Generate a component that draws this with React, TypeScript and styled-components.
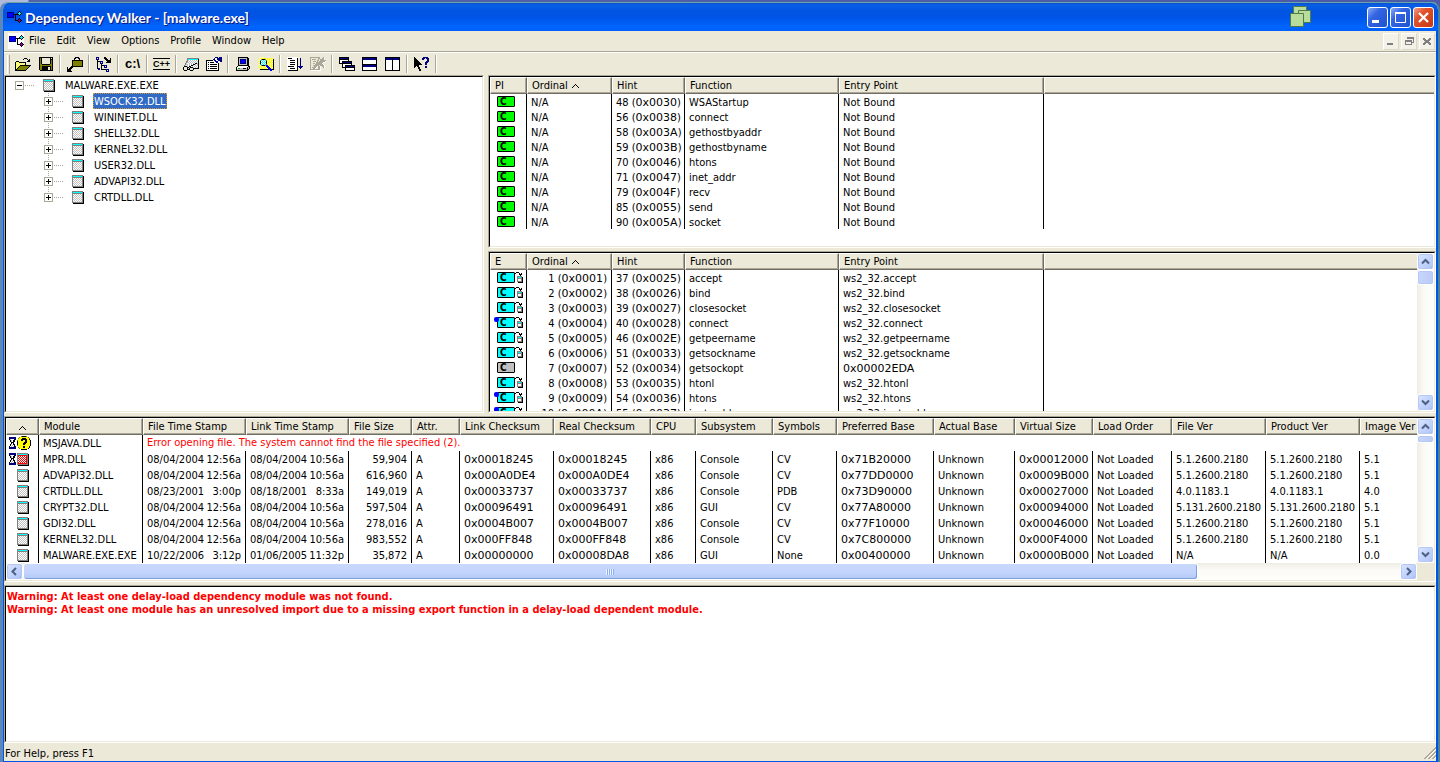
import React from 'react';
import styled, { createGlobalStyle, css } from 'styled-components';

const GlobalStyle = createGlobalStyle`
  *, *::before, *::after { box-sizing: border-box; }
  html, body { margin: 0; padding: 0; }
  body {
    font-family: "DejaVu Sans Condensed", Tahoma, "DejaVu Sans", sans-serif;
    font-size: 11px;
    line-height: 13px;
    color: #000;
    background: #5a6cb4;
    cursor: default;
  }
  button {
    font: inherit;
    color: inherit;
    margin: 0;
    padding: 0;
    border: 0;
    background: none;
  }
`;

/* ---------- pixel icons ---------- */

const palette: Record<string, string> = {
  K: '#000000', W: '#ffffff', Y: '#ffff00', O: '#808000', S: '#ece9d8', B: '#0000ff',
  N: '#000080', G: '#808080', L: '#c0c0c0', C: '#00ffff', T: '#008080', R: '#ff0000',
  P: '#800080', E: '#00c000', A: '#aca899', V: '#ffff99',
};

const PixelSvg = styled.svg`
  display: block;
  flex: none;
  shape-rendering: crispEdges;
`;

function Pixels({ rows }: { rows: string[] }) {
  const width = Math.max(...rows.map((r) => r.length));
  const rects: React.ReactElement[] = [];
  rows.forEach((row, y) => {
    let x = 0;
    while (x < row.length) {
      const ch = row[x];
      let end = x + 1;
      while (end < row.length && row[end] === ch) end += 1;
      if (palette[ch]) {
        rects.push(<rect key={`${x}-${y}`} x={x} y={y} width={end - x} height={1} fill={palette[ch]} />);
      }
      x = end;
    }
  });
  return (
    <PixelSvg width={width} height={rows.length} viewBox={`0 0 ${width} ${rows.length}`} aria-hidden="true">
      {rects}
    </PixelSvg>
  );
}

const art = {
  app: [
    '............K..',
    'NNNNNNN....KCK.',
    'NBBBBBN...KCCCK',
    'NBBBBBNKKKKKCK.',
    'NBBBBBN.K...K..',
    'NBBBBBN.K......',
    'NNNNNNN.K......',
    '........K...K..',
    '........K..KPK.',
    '........KKKPPPK',
    '...........KPK.',
    '............K..',
  ],
  open: [
    '.........KKK....',
    '........K...K.K.',
    '.............KK.',
    '.KKK........KKK.',
    'KYWYKKKKKKK.....',
    'KWYWYWYWYWK.....',
    'KYWYWYWYWYK.....',
    'KWYWYKKKKKKKKKKK',
    'KYWYKOOOOOOOOOK.',
    'KWYKOOOOOOOOOK..',
    'KYKOOOOOOOOOK...',
    'KKOOOOOOOOOK....',
    'KKKKKKKKKKK.....',
  ],
  save: [
    'KKKKKKKKKKKKKK',
    'KOKSSSSSSSSKSK',
    'KOKSSSSSSSSKKK',
    'KOKSSSSSSSSKOK',
    'KOKSSSSSSSSKOK',
    'KOKSSSSSSSSKOK',
    'KOKSSSSSSSSKOK',
    'KOOKKKKKKKKOOK',
    'KOOOOOOOOOOOOK',
    'KOOKKKKKKKKKOK',
    'KOOKKKKKKSSKOK',
    'KOOKKKKKKSSKOK',
    'KOOKKKKKKSSKOK',
    '.KKKKKKKKKKKKK',
  ],
  paste: [
    '........KKKK....',
    '.......KK..KK...',
    '.......K....K...',
    '.....KKKKKKKKKKK',
    '.....KOOOOOOOOOK',
    '.....KOOOOOOOOOK',
    '.....KOOOOOOOOOK',
    '.....KOOOOOOOOOK',
    '.....KOOOOOOOOOK',
    '....KKKKKKKKKKKK',
    'K..KKK..........',
    'K.KKK...........',
    'KKKK............',
    'KKKK............',
    'KKKKK...........',
  ],
  expand: [
    'NNN.....KK......',
    'N.N.....KKK...K.',
    'NNN......KKK..K.',
    '.K........KKKKK.',
    '.KKKNNN....KKKK.',
    '.K..N.N...KKKKK.',
    '.K..NNN.........',
    '.K...K..........',
    '.K...KKKNNN.....',
    '.K...K..N.N.....',
    '.K...K..NNN.....',
    '.KNN.K..........',
    '..NN.KKKKKNNN...',
    '..........N.N...',
    '..........NNN...',
  ],
  glasses: [
    '....GGGGGGGGGGGG',
    '....GCCCCCCCCCCK',
    '....GLWLWLWLWLWK',
    '...GGWLWLWLWLWLK',
    '...GLLWLWLWLWLWK',
    '..GLWWLWLWLWKKLK',
    '..GLLWLWLWKKLWLK',
    '.GLWLWLWKKLWLWLK',
    '.KKKLWKKWLWLWLWK',
    'K...KKLKKKLWLWLK',
    'K...K.K...KKKKKK',
    'K...KKK...K.....',
    '.KKK...KKK......',
  ],
  properties: [
    '........WNNN.NNN',
    '.......WNWWNNNNN',
    '......WNNWWNNNNN',
    'KKKKKKKWNNWWNNNN',
    'KWWWWWWWWNNNW.NN',
    'KWKWKKKKWWNNWW..',
    'KWWWWWWWWWWWK...',
    'KWKWKKKKKKKWK...',
    'KWWWWWWWWWWWK...',
    'KWKWKKKKKKKWK...',
    'KWWWWWWWWWWWK...',
    'KWKWKKKKKKKWK...',
    'KWWWWWWWWWWWK...',
    'KKKKKKKKKKKKK...',
  ],
  computer: [
    '..KKKKKKKKKK..',
    '..KLLLLLLLLKK.',
    '..KLNNNNNNLKK.',
    '..KLNBBBBNLKK.',
    '..KLNBBBBNLKK.',
    '..KLNBBBBNLKK.',
    '..KLNNNNNNLKK.',
    '..KLLLLLLLLKK.',
    '..KKKKKKKKKKK.',
    '.KWWWWWWWWWWKK',
    'KWWWWWWWWWWKLK',
    'KWEELLLKKKLKLK',
    'KLLLLLLLLLLKK.',
    'KKKKKKKKKKKK..',
  ],
  search: [
    '..VVVV..........',
    '.VYVYVYYVYVYVYY.',
    '.YVGKKKGVYVYVYVK',
    '.VGCWCWCGYVYVYYK',
    '.YKWCWCWKYVYVYVK',
    '.VKCWCWCKVYVYVYK',
    '.YKWCWCWKYVYVYVK',
    '.VGCWCWCGYVYVYYK',
    '.YVGKKKGBBVYVYVK',
    '.VYVYVYVBBBYVYYK',
    '.YVYVYVYVBBBVYVK',
    '.VYVYVYVYVBBBYYK',
    '..KKKKKKKKKBBBKK',
    '............BB..',
  ],
  listDown: [
    'WWWWWWWWWWW.....',
    'WKKKKWWWWWK..N..',
    'WWWWWWWWWWK..N..',
    'WWWKKKKKWWK..N..',
    'WWWWWWWWWWK..N..',
    'WWWKKKKKWWK..N..',
    'WWWWWWWWWWK..N..',
    'WWWKKKKKWWK..N..',
    'WWWWWWWWWWK..N..',
    'WKKKKKKWWWKNNNNN',
    'WWWWWWWWWWK.NNN.',
    'WWWKKKKKWWK..N..',
    'WWWWWWWWWWK.....',
    '.KKKKKKKKKK.....',
  ],
  listOff: [
    'AAAAAAAAAA...A..',
    'A.......AA..AAW.',
    'A.AAAA..A.AAAAW.',
    'A......AA.AAAAAA',
    'A..AAA.A.AAAAAAW',
    'A.....AAAAAAAWW.',
    'A..AA.AAAAAAW...',
    'A....AAAAAAAAW..',
    'A..AAAAAA.AAAAW.',
    'A...AAAWAAW.AAW.',
    'A.AAAAW.AAW..AW.',
    'A..AAW..AAW.....',
    'AAAAAAAAAAW.....',
    '.WWWWWWWWWW.....',
  ],
  cascade: [
    'KKKKKKKKKK......',
    'KNNNNNNNNK......',
    'KKKKKKKKKK......',
    'KWWWWWWWWK......',
    'KWWKKKKKKKKKK...',
    'KWWKNNNNNNNNK...',
    'KKKKKKKKKKKKK...',
    '...KWWWWWWWWK...',
    '...KWWKKKKKKKKKK',
    '...KWWKNNNNNNNNK',
    '...KKKKKKKKKKKKK',
    '......KWWWWWWWWK',
    '......KWWWWWWWWK',
    '......KKKKKKKKKK',
  ],
  tileH: [
    'KKKKKKKKKKKKKKK',
    'KNNNNNNNNNNNNNK',
    'KNNNNNNNNNNNNNK',
    'KWWWWWWWWWWWWWK',
    'KWWWWWWWWWWWWWK',
    'KWWWWWWWWWWWWWK',
    'KWWWWWWWWWWWWWK',
    'KKKKKKKKKKKKKKK',
    'KNNNNNNNNNNNNNK',
    'KNNNNNNNNNNNNNK',
    'KWWWWWWWWWWWWWK',
    'KWWWWWWWWWWWWWK',
    'KWWWWWWWWWWWWWK',
    'KKKKKKKKKKKKKKK',
  ],
  tileV: [
    'KKKKKKKKKKKKKKK',
    'KNNNNNNKNNNNNNK',
    'KNNNNNNKNNNNNNK',
    'KWWWWWWKWWWWWWK',
    'KWWWWWWKWWWWWWK',
    'KWWWWWWKWWWWWWK',
    'KWWWWWWKWWWWWWK',
    'KWWWWWWKWWWWWWK',
    'KWWWWWWKWWWWWWK',
    'KWWWWWWKWWWWWWK',
    'KWWWWWWKWWWWWWK',
    'KWWWWWWKWWWWWWK',
    'KWWWWWWKWWWWWWK',
    'KKKKKKKKKKKKKKK',
  ],
  help: [
    'K........NNNNN..',
    'KK......NNN.NNN.',
    'KKK.....NN...NN.',
    'KKKK.........NN.',
    'KKKKK.......NNN.',
    'KKKKKK.....NNN..',
    'KKKKKKK....NN...',
    'KKKKKKKK...NN...',
    'KKKKK...........',
    'KK.KK......NN...',
    'K...KK.....NN...',
    '....KK..........',
    '.....KK.........',
    '.....KK.........',
  ],
  module: [
    'GGGGGGGGGGG.',
    'GCCCCCCCCCGK',
    'GGGGGGGGGGGK',
    'GWLWLWLWLWGK',
    'GLWLWLWLWLGK',
    'GWLWLWLWLWGK',
    'GLWLWLWLWLGK',
    'GWLWLWLWLWGK',
    'GLWLWLWLWLGK',
    'GWLWLWLWLWGK',
    'GLWLWLWLWLGK',
    'GGGGGGGGGGGK',
    '.KKKKKKKKKKK',
  ],
  moduleRed: [
    'GGGGGGGGGGG.',
    'GCCCCCCCCCGK',
    'GRRRRRRRRRGK',
    'GRWRWRWRWRGK',
    'GWRWRWRWRRGK',
    'GRWRWRWRWRGK',
    'GWRWRWRWRRGK',
    'GRWRWRWRWRGK',
    'GWRWRWRWRRGK',
    'GRWRWRWRWRGK',
    'GRRRRRRRRRGK',
    'GGGGGGGGGGGK',
    '.KKKKKKKKKKK',
  ],
  hourglass: [
    'NNNNNNN',
    'NNNNNNN',
    'KLWWWKN',
    '.KLWKK.',
    '.KLWKK.',
    '..KKK..',
    '..KWK..',
    '.KLWKK.',
    '.KWLWK.',
    'KWLWLKN',
    'NNNNNNN',
    'NNNNNNN',
  ],
  question: [
    '....OKKKKO....',
    '..OYYYYYYYYO..',
    '.OYYYKKKKYYYO.',
    '.YYYKKKKKKYYK.',
    'OYYYKKYYKKYYYK',
    'KYYYYYYYKKYYYK',
    'KYYYYYYKKKYYYK',
    'KYYYYYKKKYYYYK',
    'KYYYYYKKYYYYYK',
    'OYYYYYYYYYYYYK',
    '.YYYYYKKYYYYK.',
    '.OYYYYKKYYYYK.',
    '..OYYYYYYYYK..',
    '....KKKKKK....',
  ],
  forward: [
    '.KKK....',
    'K...K.K.',
    '....KKK.',
    '.....K..',
    '..GGGGG.',
    '..GCCCGK',
    '..GGGGGK',
    '..GWWWGK',
    '..GWWWGK',
    '..GGGGGK',
    '...KKKKK',
  ],
  caret: [
    '...K...',
    '..K.K..',
    '.K...K.',
    'K.....K',
  ],
  grip: [
    '...........A',
    '..........AA',
    '.........AAW',
    '........AAW.',
    '.......AAW.A',
    '......AAW.AA',
    '.....AAW.AAW',
    '....AAW.AAW.',
    '...AAW.AAW.A',
    '..AAW.AAW.AA',
    '.AAW.AAW.AAW',
    'AAW.AAW.AAW.',
  ],
};

/* ---------- window frame ---------- */

const Desktop = styled.div`
  min-height: 100vh;
  padding-top: 2px;
  display: flex;
  background: linear-gradient(90deg, #b0b8dc 0, #b0b8dc 28px, #5363a8 29px, #4c5aa8 100%);
`;

const Frame = styled.main`
  flex: 1;
  min-width: 0;
  display: flex;
  flex-direction: column;
  border-style: solid;
  border-width: 1px 2px 0 3px;
  border-color: #6aa6ae #4c8295 #0054e3 #5b88b8;
  border-radius: 8px 8px 0 0;
  background: #ece9d8;
  overflow: hidden;
`;

const TitleBar = styled.header`
  height: 28px;
  flex: none;
  display: flex;
  align-items: center;
  padding: 0 4px;
  background: linear-gradient(#0a4fc4 0, #0a5fe8 2px, #0054e0 8px, #0054e6 14px, #0064ff 24px, #0060fa 100%);
`;

const Title = styled.h1`
  flex: 1;
  margin: 0;
  padding: 2px 0 0 3px;
  font: bold 14px/20px Lato, "Trebuchet MS", sans-serif;
  color: #fff;
  text-shadow: 1px 1px 0 #0a1883;
`;

const CaptionButtons = styled.div`
  display: flex;
  gap: 2px;
  margin-left: 55px;
`;

const CaptionButton = styled.button<{ $close?: boolean }>`
  width: 21px;
  height: 21px;
  display: flex;
  align-items: center;
  justify-content: center;
  border: 1px solid #fff;
  border-radius: 3px;
  background: ${(p) => (p.$close
    ? 'linear-gradient(135deg, #f0a084 0, #e0532e 35%, #c83810 100%)'
    : 'linear-gradient(135deg, #8cacf4 0, #3465e4 35%, #1f52cc 100%)')};
`;

const Body = styled.div`
  flex: 1;
  min-height: 0;
  display: flex;
  flex-direction: column;
  border: solid #0054e3;
  border-width: 0 2px 1px 1px;
`;

const MenuBar = styled.nav`
  height: 21px;
  flex: none;
  display: flex;
  align-items: center;
  padding: 0 1px 0 4px;
  border-bottom: 1px solid #aca899;
`;

const MenuIcon = styled.span`
  display: flex;
  width: 16px;
  height: 16px;
  align-items: center;
  justify-content: flex-end;
  background: #fff;
`;

const Menu = styled.button`
  padding: 1px 6px 2px 5px;
`;

const Spacer = styled.span`
  flex: 1;
`;

const MdiButton = styled.button`
  width: 16px;
  height: 17px;
  margin-left: 2px;
  display: flex;
  align-items: center;
  justify-content: center;
  border: 1px solid #fff;
  border-right-color: #dcd8c8;
  border-bottom-color: #dcd8c8;
  background: #f4f2e8;
`;

const ToolBar = styled.div`
  height: 23px;
  flex: none;
  display: flex;
  align-items: center;
  border-top: 1px solid #fff;
`;

const Gripper = styled.span`
  width: 3px;
  height: 19px;
  margin: 0 1px 0 3px;
  border-left: 1px solid #fff;
  border-right: 1px solid #aca899;
`;

const Tool = styled.button`
  width: 23px;
  height: 21px;
  display: flex;
  align-items: center;
  justify-content: center;
`;

const ToolSeparator = styled.span`
  width: 2px;
  height: 18px;
  margin: 0 2px;
  border-left: 1px solid #aca899;
  border-right: 1px solid #fff;
`;

const ToolText = styled.span<{ $lined?: boolean }>`
  font: bold 13px/14px "Liberation Sans", Arial, sans-serif;
  ${(p) => p.$lined && css`
    font-size: 9px;
    line-height: 10px;
    border: solid #000;
    border-width: 1px 0;
  `}
`;

/* ---------- panes ---------- */

const Upper = styled.div`
  flex: none;
  display: grid;
  grid-template-columns: 480px minmax(0, 1fr);
  gap: 4px;
`;

const Stack = styled.div`
  display: grid;
  grid-template-rows: 173px 162px;
  gap: 3px;
  min-width: 0;
`;

const PaneOuter = styled.section<{ $grow?: boolean }>`
  display: flex;
  min-width: 0;
  border: 1px solid;
  border-color: #aca899 #fff #fff #aca899;
  ${(p) => p.$grow && css`flex: 1;`}
`;

const PaneInner = styled.div`
  flex: 1;
  min-width: 0;
  display: flex;
  border: 1px solid;
  border-color: #000 #ece9d8 #ece9d8 #000;
  background: #fff;
  overflow: hidden;
`;

function Pane({ children, grow, label }: { children: React.ReactNode; grow?: boolean; label: string }) {
  return (
    <PaneOuter $grow={grow} aria-label={label}>
      <PaneInner>{children}</PaneInner>
    </PaneOuter>
  );
}

const Lower = styled.div`
  flex: 1;
  display: flex;
  flex-direction: column;
  gap: 3px;
  padding-top: 3px;
`;

/* ---------- tree ---------- */

const Tree = styled.ul`
  list-style: none;
  margin: 0;
  padding: 0 0 0 9px;
`;

const Branch = styled.ul`
  list-style: none;
  margin: 0;
  padding: 0 0 0 29px;
`;

const Node = styled.div`
  height: 16px;
  display: flex;
  align-items: center;
`;

const Stem = styled.span<{ $child?: boolean }>`
  align-self: stretch;
  width: 9px;
  display: flex;
  align-items: center;
  ${(p) => p.$child && css`
    background: repeating-linear-gradient(#aca899 0, #aca899 1px, transparent 1px, transparent 2px) 4px 0 / 1px 100% no-repeat;
    li:last-child > div > & { background-size: 1px 50%; }
  `}
`;

const Toggle = styled.button`
  width: 9px;
  height: 9px;
  border: 1px solid #aca899;
  background: #fff;
`;

const Twig = styled.span`
  width: 10px;
  height: 1px;
  margin-right: 9px;
  background: repeating-linear-gradient(90deg, transparent 0, transparent 1px, #aca899 1px, #aca899 2px);
`;

const NodeLabel = styled.span<{ $selected?: boolean }>`
  height: 16px;
  margin-left: 9px;
  padding: 1px 0;
  border: 1px solid transparent;
  line-height: 13px;
  ${(p) => p.$selected && css`
    color: #fff;
    background: #316ac5;
    border: 1px dotted #ce953a;
  `}
`;

function TreeNode({ name, open, selected, child }: { name: string; open?: boolean; selected?: boolean; child?: boolean }) {
  return (
    <Node>
      <Stem $child={child}>
        <Toggle aria-label={open ? `Collapse ${name}` : `Expand ${name}`}>
          <Pixels rows={open
            ? ['.......', '.......', '.......', '.KKKKK.', '.......', '.......', '.......']
            : ['.......', '...K...', '...K...', '.KKKKK.', '...K...', '...K...', '.......']} />
        </Toggle>
      </Stem>
      <Twig />
      <Pixels rows={art.module} />
      <NodeLabel $selected={selected}>{name}</NodeLabel>
    </Node>
  );
}

/* ---------- list views ---------- */

const ListArea = styled.div`
  flex: 1;
  min-width: 0;
  display: flex;
  flex-direction: column;
  overflow: hidden;
`;

const ListScroll = styled.div`
  flex: 1;
  min-height: 0;
  overflow: hidden;
`;

const Table = styled.table`
  width: 100%;
  table-layout: fixed;
  border-collapse: separate;
  border-spacing: 0;
`;

const HeadCell = styled.th<{ $center?: boolean; $blank?: boolean }>`
  height: 17px;
  padding: ${(p) => (p.$center ? '1px 0 0' : '1px 0 0 4px')};
  font-weight: normal;
  text-align: ${(p) => (p.$center ? 'center' : 'left')};
  white-space: nowrap;
  overflow: hidden;
  line-height: 14px;
  background: #ece9d8;
  border: 1px solid;
  border-color: #fff #716f64 #716f64 #fff;
  box-shadow: inset -1px -1px 0 #aca899;
  ${(p) => p.$blank && css`border-right: 0; box-shadow: inset 0 -1px 0 #aca899;`}
`;

const HeadLabel = styled.span`
  display: inline-flex;
  align-items: center;
  gap: 4px;
`;

const Cell = styled.td<{ $fn?: boolean; $right?: boolean; $plain?: boolean; $icon?: boolean; $error?: boolean }>`
  height: ${(p) => (p.$fn ? 15 : 16)}px;
  padding: ${(p) => (p.$icon ? '0' : p.$fn ? '2px 4px 0' : '0 4px')};
  line-height: 13px;
  white-space: pre;
  text-align: ${(p) => (p.$right ? 'right' : 'left')};
  border-right: ${(p) => (p.$plain ? '0' : '1px solid #000')};
  ${(p) => !p.$error && css`overflow: hidden;`}
  ${(p) => p.$error && css`color: #ff0000; line-height: 12px; padding-bottom: 1px;`}
`;

const Stamp = styled.span`
  display: flex;
  justify-content: space-between;
`;

const HexDigits = styled.span`
  font-family: "DejaVu Sans", sans-serif;
`;

function Value({ text }: { text: string }) {
  return (
    <>
      {text.split(/(0x[0-9A-F]+)/).map((part, i) => (i % 2 ? <HexDigits key={i}>{part}</HexDigits> : part))}
    </>
  );
}

const IconRow = styled.span`
  display: flex;
  align-items: center;
  position: relative;
  padding-left: 7px;
`;

const Badge = styled.span<{ $color: string }>`
  width: 18px;
  height: 11px;
  padding-left: 2px;
  display: block;
  border: 1px solid #000;
  border-radius: 1px;
  background: ${(p) => p.$color};
  font: bold 10px/9px "DejaVu Sans Condensed", sans-serif;
`;

const CallDot = styled.span`
  position: absolute;
  left: 4px;
  top: 0;
  width: 5px;
  height: 5px;
  border-radius: 2px;
  background: #0000ff;
`;

type FnRow = { icon: 'import' | 'forward' | 'called' | 'plain'; cells: string[] };

function FunctionIcon({ kind }: { kind: FnRow['icon'] }) {
  const color = kind === 'import' ? '#00ff00' : kind === 'plain' ? '#c0c0c0' : '#00ffff';
  return (
    <IconRow>
      <Badge $color={color}>C</Badge>
      {(kind === 'forward' || kind === 'called') && <Pixels rows={art.forward} />}
      {kind === 'called' && <CallDot />}
    </IconRow>
  );
}

function FunctionTable({ first, rows, ordinalRight }: { first: string; rows: FnRow[]; ordinalRight?: boolean }) {
  return (
    <ListScroll>
      <Table>
        <colgroup>
          {[37, 85, 73, 154, 205].map((w, i) => <col key={i} width={w} />)}
          <col />
        </colgroup>
        <thead>
          <tr>
            <HeadCell>{first}</HeadCell>
            <HeadCell><HeadLabel>Ordinal <Pixels rows={art.caret} /></HeadLabel></HeadCell>
            <HeadCell>Hint</HeadCell>
            <HeadCell>Function</HeadCell>
            <HeadCell>Entry Point</HeadCell>
            <HeadCell $blank />
          </tr>
        </thead>
        <tbody>
          {rows.map((r) => (
            <tr key={r.cells[2]}>
              <Cell $fn $icon><FunctionIcon kind={r.icon} /></Cell>
              <Cell $fn $right={ordinalRight}><Value text={r.cells[0]} /></Cell>
              <Cell $fn><Value text={r.cells[1]} /></Cell>
              <Cell $fn>{r.cells[2]}</Cell>
              <Cell $fn><Value text={r.cells[3]} /></Cell>
              <Cell $fn $plain />
            </tr>
          ))}
        </tbody>
      </Table>
    </ListScroll>
  );
}

/* ---------- scroll bars ---------- */

const VBar = styled.div`
  width: 17px;
  flex: none;
  display: flex;
  flex-direction: column;
  background: linear-gradient(90deg, #eeede5, #fbfaf6 40%, #fefefb);
`;

const HBar = styled.div`
  height: 17px;
  flex: none;
  display: flex;
  background: linear-gradient(#eeede5, #fbfaf6 40%, #fefefb);
`;

const ArrowButton = styled.button`
  width: 17px;
  height: 17px;
  flex: none;
  display: flex;
  align-items: center;
  justify-content: center;
  border: 1px solid #fff;
  border-radius: 3px;
  background: linear-gradient(135deg, #dce6fe, #c3d3fd 50%, #aec4f6);
  box-shadow: inset 0 0 0 1px #b4c8f6, inset -1px -1px 0 #8ba8e4;
`;

const VThumb = styled.div<{ $size: number }>`
  height: ${(p) => p.$size}px;
  border: 1px solid #fff;
  border-radius: 3px;
  background: linear-gradient(90deg, #c8d6fb, #b9cbf7);
  box-shadow: inset 0 0 0 1px #b4c8f6, inset 0 -1px 0 #7f9fdd;
`;

const HTrack = styled.div`
  flex: 1;
  display: flex;
`;

const HThumb = styled.div`
  flex: 29;
  display: flex;
  align-items: center;
  justify-content: center;
  border: 1px solid #fff;
  border-radius: 3px;
  background: linear-gradient(#c9d8fc, #c2d3fc 60%, #b0c8f4);
  box-shadow: inset -1px -1px 0 #7f9fdd;
`;

const HRest = styled.div`
  flex: 5;
`;

const ThumbGrip = styled.span`
  width: 8px;
  height: 6px;
  background: repeating-linear-gradient(90deg, #eef4fe 0, #eef4fe 1px, #8cb0f8 1px, #8cb0f8 2px);
`;

const Corner = styled.div`
  height: 17px;
  background: #ece9d8;
`;

const Track = styled.div`
  flex: 1;
`;

function Chevron({ d }: { d: string }) {
  return (
    <svg width="9" height="9" viewBox="0 0 9 9" fill="none" stroke="#4d6185" strokeWidth="2" aria-hidden="true">
      <path d={d} />
    </svg>
  );
}

function VerticalBar({ thumb, corner }: { thumb: number; corner?: boolean }) {
  return (
    <VBar>
      <ArrowButton aria-label="Scroll up"><Chevron d="M1 6.5 4.5 3 8 6.5" /></ArrowButton>
      <VThumb $size={thumb} />
      <Track />
      <ArrowButton aria-label="Scroll down"><Chevron d="M1 2.5 4.5 6 8 2.5" /></ArrowButton>
      {corner && <Corner />}
    </VBar>
  );
}

/* ---------- log and status ---------- */

const Log = styled.div`
  flex: 1;
  padding: 3px 1px 0;
  font-weight: bold;
  line-height: 13px;
  color: #ff0000;
`;

const LogLine = styled.p`
  margin: 0;
`;

const StatusBar = styled.footer`
  height: 18px;
  flex: none;
  display: flex;
  align-items: center;
  justify-content: space-between;
  padding: 2px 0 0 1px;
`;

/* ---------- data ---------- */

const dlls = ['WSOCK32.DLL', 'WININET.DLL', 'SHELL32.DLL', 'KERNEL32.DLL', 'USER32.DLL', 'ADVAPI32.DLL', 'CRTDLL.DLL'];

const imports: FnRow[] = [
  ['48 (0x0030)', 'WSAStartup'],
  ['56 (0x0038)', 'connect'],
  ['58 (0x003A)', 'gethostbyaddr'],
  ['59 (0x003B)', 'gethostbyname'],
  ['70 (0x0046)', 'htons'],
  ['71 (0x0047)', 'inet_addr'],
  ['79 (0x004F)', 'recv'],
  ['85 (0x0055)', 'send'],
  ['90 (0x005A)', 'socket'],
].map(([hint, fn]) => ({ icon: 'import', cells: ['N/A', hint, fn, 'Not Bound'] }));

const exportsList: FnRow[] = [
  { icon: 'forward', cells: ['1 (0x0001)', '37 (0x0025)', 'accept', 'ws2_32.accept'] },
  { icon: 'forward', cells: ['2 (0x0002)', '38 (0x0026)', 'bind', 'ws2_32.bind'] },
  { icon: 'forward', cells: ['3 (0x0003)', '39 (0x0027)', 'closesocket', 'ws2_32.closesocket'] },
  { icon: 'called', cells: ['4 (0x0004)', '40 (0x0028)', 'connect', 'ws2_32.connect'] },
  { icon: 'forward', cells: ['5 (0x0005)', '46 (0x002E)', 'getpeername', 'ws2_32.getpeername'] },
  { icon: 'forward', cells: ['6 (0x0006)', '51 (0x0033)', 'getsockname', 'ws2_32.getsockname'] },
  { icon: 'plain', cells: ['7 (0x0007)', '52 (0x0034)', 'getsockopt', '0x00002EDA'] },
  { icon: 'forward', cells: ['8 (0x0008)', '53 (0x0035)', 'htonl', 'ws2_32.htonl'] },
  { icon: 'called', cells: ['9 (0x0009)', '54 (0x0036)', 'htons', 'ws2_32.htons'] },
  { icon: 'called', cells: ['10 (0x000A)', '55 (0x0037)', 'inet_addr', 'ws2_32.inet_addr'] },
];

const moduleColumns: [string, number][] = [
  ['Module', 104], ['File Time Stamp', 103], ['Link Time Stamp', 103], ['File Size', 63], ['Attr.', 48],
  ['Link Checksum', 94], ['Real Checksum', 97], ['CPU', 45], ['Subsystem', 77], ['Symbols', 64],
  ['Preferred Base', 97], ['Actual Base', 81], ['Virtual Size', 78], ['Load Order', 79], ['File Ver', 94],
  ['Product Ver', 94],
];

const modules: string[][] = [
  ['MPR.DLL', '08/04/2004 12:56a', '08/04/2004 10:56a', '59,904', 'A', '0x00018245', '0x00018245', 'x86', 'Console', 'CV', '0x71B20000', 'Unknown', '0x00012000', 'Not Loaded', '5.1.2600.2180', '5.1.2600.2180', '5.1'],
  ['ADVAPI32.DLL', '08/04/2004 12:56a', '08/04/2004 10:56a', '616,960', 'A', '0x000A0DE4', '0x000A0DE4', 'x86', 'Console', 'CV', '0x77DD0000', 'Unknown', '0x0009B000', 'Not Loaded', '5.1.2600.2180', '5.1.2600.2180', '5.1'],
  ['CRTDLL.DLL', '08/23/2001 3:00p', '08/18/2001 8:33a', '149,019', 'A', '0x00033737', '0x00033737', 'x86', 'Console', 'PDB', '0x73D90000', 'Unknown', '0x00027000', 'Not Loaded', '4.0.1183.1', '4.0.1183.1', '4.0'],
  ['CRYPT32.DLL', '08/04/2004 12:56a', '08/04/2004 10:56a', '597,504', 'A', '0x00096491', '0x00096491', 'x86', 'GUI', 'CV', '0x77A80000', 'Unknown', '0x00094000', 'Not Loaded', '5.131.2600.2180', '5.131.2600.2180', '5.1'],
  ['GDI32.DLL', '08/04/2004 12:56a', '08/04/2004 10:56a', '278,016', 'A', '0x0004B007', '0x0004B007', 'x86', 'Console', 'CV', '0x77F10000', 'Unknown', '0x00046000', 'Not Loaded', '5.1.2600.2180', '5.1.2600.2180', '5.1'],
  ['KERNEL32.DLL', '08/04/2004 12:56a', '08/04/2004 10:56a', '983,552', 'A', '0x000FF848', '0x000FF848', 'x86', 'Console', 'CV', '0x7C800000', 'Unknown', '0x000F4000', 'Not Loaded', '5.1.2600.2180', '5.1.2600.2180', '5.1'],
  ['MALWARE.EXE.EXE', '10/22/2006 3:12p', '01/06/2005 11:32p', '35,872', 'A', '0x00000000', '0x00008DA8', 'x86', 'GUI', 'None', '0x00400000', 'Unknown', '0x0000B000', 'Not Loaded', 'N/A', 'N/A', '0.0'],
];

const ModuleIcons = styled.span`
  display: flex;
  align-items: center;
  justify-content: flex-end;
  gap: 1px;
  padding-right: 9px;
`;

const QuestionIcons = styled(ModuleIcons)`
  padding-right: 7px;
`;

function ModuleTable() {
  return (
    <Table>
      <colgroup>
        <col width={33} />
        {moduleColumns.map(([name, w]) => <col key={name} width={w} />)}
        <col />
      </colgroup>
      <thead>
        <tr>
          <HeadCell $center aria-label="Status"><HeadLabel><Pixels rows={art.caret} /></HeadLabel></HeadCell>
          {moduleColumns.map(([name]) => <HeadCell key={name}>{name}</HeadCell>)}
          <HeadCell $blank>Image Ver</HeadCell>
        </tr>
      </thead>
      <tbody>
        <tr>
          <Cell $icon><QuestionIcons><Pixels rows={art.hourglass} /><Pixels rows={art.question} /></QuestionIcons></Cell>
          <Cell>MSJAVA.DLL</Cell>
          <Cell $plain $error colSpan={16}>Error opening file. The system cannot find the file specified (2).</Cell>
        </tr>
        {modules.map((m, row) => (
          <tr key={m[0]}>
            <Cell $icon>
              <ModuleIcons>
                {row === 0 && <Pixels rows={art.hourglass} />}
                <Pixels rows={row === 0 ? art.moduleRed : art.module} />
              </ModuleIcons>
            </Cell>
            {m.map((text, i) => (
              <Cell key={i} $right={i === 3} $plain={i === 16}>
                {i === 1 || i === 2
                  ? <Stamp>{text.split(' ').map((part) => <span key={part}>{part}</span>)}</Stamp>
                  : <Value text={text} />}
              </Cell>
            ))}
          </tr>
        ))}
      </tbody>
    </Table>
  );
}

type ToolItem = { label: string; icon: React.ReactNode } | null;

const tools: ToolItem[] = [
  { label: 'Open', icon: <Pixels rows={art.open} /> },
  { label: 'Save', icon: <Pixels rows={art.save} /> },
  null,
  { label: 'Copy', icon: <Pixels rows={art.paste} /> },
  null,
  { label: 'Auto expand', icon: <Pixels rows={art.expand} /> },
  null,
  { label: 'Full paths', icon: <ToolText>c:\</ToolText> },
  null,
  { label: 'Undecorate C++ functions', icon: <ToolText $lined>C++</ToolText> },
  null,
  { label: 'View module in external viewer', icon: <Pixels rows={art.glasses} /> },
  { label: 'Properties', icon: <Pixels rows={art.properties} /> },
  null,
  { label: 'System information', icon: <Pixels rows={art.computer} /> },
  { label: 'Configure search order', icon: <Pixels rows={art.search} /> },
  null,
  { label: 'Start profiling', icon: <Pixels rows={art.listDown} /> },
  { label: 'Stop profiling', icon: <Pixels rows={art.listOff} /> },
  null,
  { label: 'Cascade', icon: <Pixels rows={art.cascade} /> },
  { label: 'Tile horizontally', icon: <Pixels rows={art.tileH} /> },
  { label: 'Tile vertically', icon: <Pixels rows={art.tileV} /> },
  null,
  { label: 'Context help', icon: <Pixels rows={art.help} /> },
  null,
];

export default function App() {
  return (
    <Desktop>
      <GlobalStyle />
      <Frame>
        <TitleBar>
          <Pixels rows={art.app} />
          <Title>Dependency Walker - [malware.exe]</Title>
          <svg width="22" height="22" viewBox="0 0 22 22" fill="#b9dc9c" stroke="#4f7d45" aria-hidden="true">
            <path d="M3.500 0.500h13v13h-13z" />
            <path d="M8.500 4.500h12v12h-12z" />
            <path d="M0.500 7.500h13v13h-13z" />
          </svg>
          <CaptionButtons>
            <CaptionButton aria-label="Minimize">
              <svg width="15" height="15" aria-hidden="true"><path d="M2 10h7v3H2z" fill="#fff" /></svg>
            </CaptionButton>
            <CaptionButton aria-label="Maximize">
              <svg width="15" height="15" fill="none" stroke="#fff" aria-hidden="true">
                <path d="M2.500 3.500h10v9h-10z" /><path d="M2 3h11" strokeWidth="2" />
              </svg>
            </CaptionButton>
            <CaptionButton $close aria-label="Close">
              <svg width="15" height="15" stroke="#fff" strokeWidth="2.200" aria-hidden="true"><path d="M3 3l9 9M12 3l-9 9" /></svg>
            </CaptionButton>
          </CaptionButtons>
        </TitleBar>
        <Body>
          <MenuBar>
            <MenuIcon><Pixels rows={art.app} /></MenuIcon>
            {['File', 'Edit', 'View', 'Options', 'Profile', 'Window', 'Help'].map((m) => <Menu key={m}>{m}</Menu>)}
            <Spacer />
            <MdiButton aria-label="Minimize document">
              <Pixels rows={['........', '........', '........', '........', '........', '........', 'GGGGGG..', 'GGGGGG..']} />
            </MdiButton>
            <MdiButton aria-label="Restore document">
              <Pixels rows={['..GGGGGGG', '..GGGGGGG', '........G', 'GGGGGGG.G', 'GGGGGGG.G', 'G.....GGG', 'G.....G..', 'GGGGGGG..']} />
            </MdiButton>
            <MdiButton aria-label="Close document">
              <Pixels rows={['GG....GG', 'GGG..GGG', '.GGGGGG.', '..GGGG..', '.GGGGGG.', 'GGG..GGG', 'GG....GG']} />
            </MdiButton>
          </MenuBar>
          <ToolBar role="toolbar" aria-label="Main toolbar">
            <Gripper />
            {tools.map((t, i) => (t
              ? <Tool key={i} aria-label={t.label}>{t.icon}</Tool>
              : <ToolSeparator key={i} />))}
          </ToolBar>
          <Upper>
            <Pane label="Module dependency tree">
              <Tree>
                <li>
                  <TreeNode name="MALWARE.EXE.EXE" open />
                  <Branch>
                    {dlls.map((d, i) => (
                      <li key={d}><TreeNode name={d} selected={i === 0} child /></li>
                    ))}
                  </Branch>
                </li>
              </Tree>
            </Pane>
            <Stack>
              <Pane label="Parent imports">
                <FunctionTable first="PI" rows={imports} />
              </Pane>
              <Pane label="Exports">
                <FunctionTable first="E" rows={exportsList} ordinalRight />
                <VerticalBar thumb={15} />
              </Pane>
            </Stack>
          </Upper>
          <Lower>
            <Pane label="Module list">
              <ListArea>
                <ListScroll><ModuleTable /></ListScroll>
                <HBar>
                  <ArrowButton aria-label="Scroll left"><Chevron d="M6 1 2.500 4.500 6 8" /></ArrowButton>
                  <HTrack><HThumb><ThumbGrip /></HThumb><HRest /></HTrack>
                  <ArrowButton aria-label="Scroll right"><Chevron d="M3 1 6.500 4.500 3 8" /></ArrowButton>
                </HBar>
              </ListArea>
              <VerticalBar thumb={8} corner />
            </Pane>
            <Pane label="Log" grow>
              <Log>
                <LogLine>Warning: At least one delay-load dependency module was not found.</LogLine>
                <LogLine>Warning: At least one module has an unresolved import due to a missing export function in a delay-load dependent module.</LogLine>
              </Log>
            </Pane>
          </Lower>
          <StatusBar>
            <span>For Help, press F1</span>
            <Pixels rows={art.grip} />
          </StatusBar>
        </Body>
      </Frame>
    </Desktop>
  );
}
